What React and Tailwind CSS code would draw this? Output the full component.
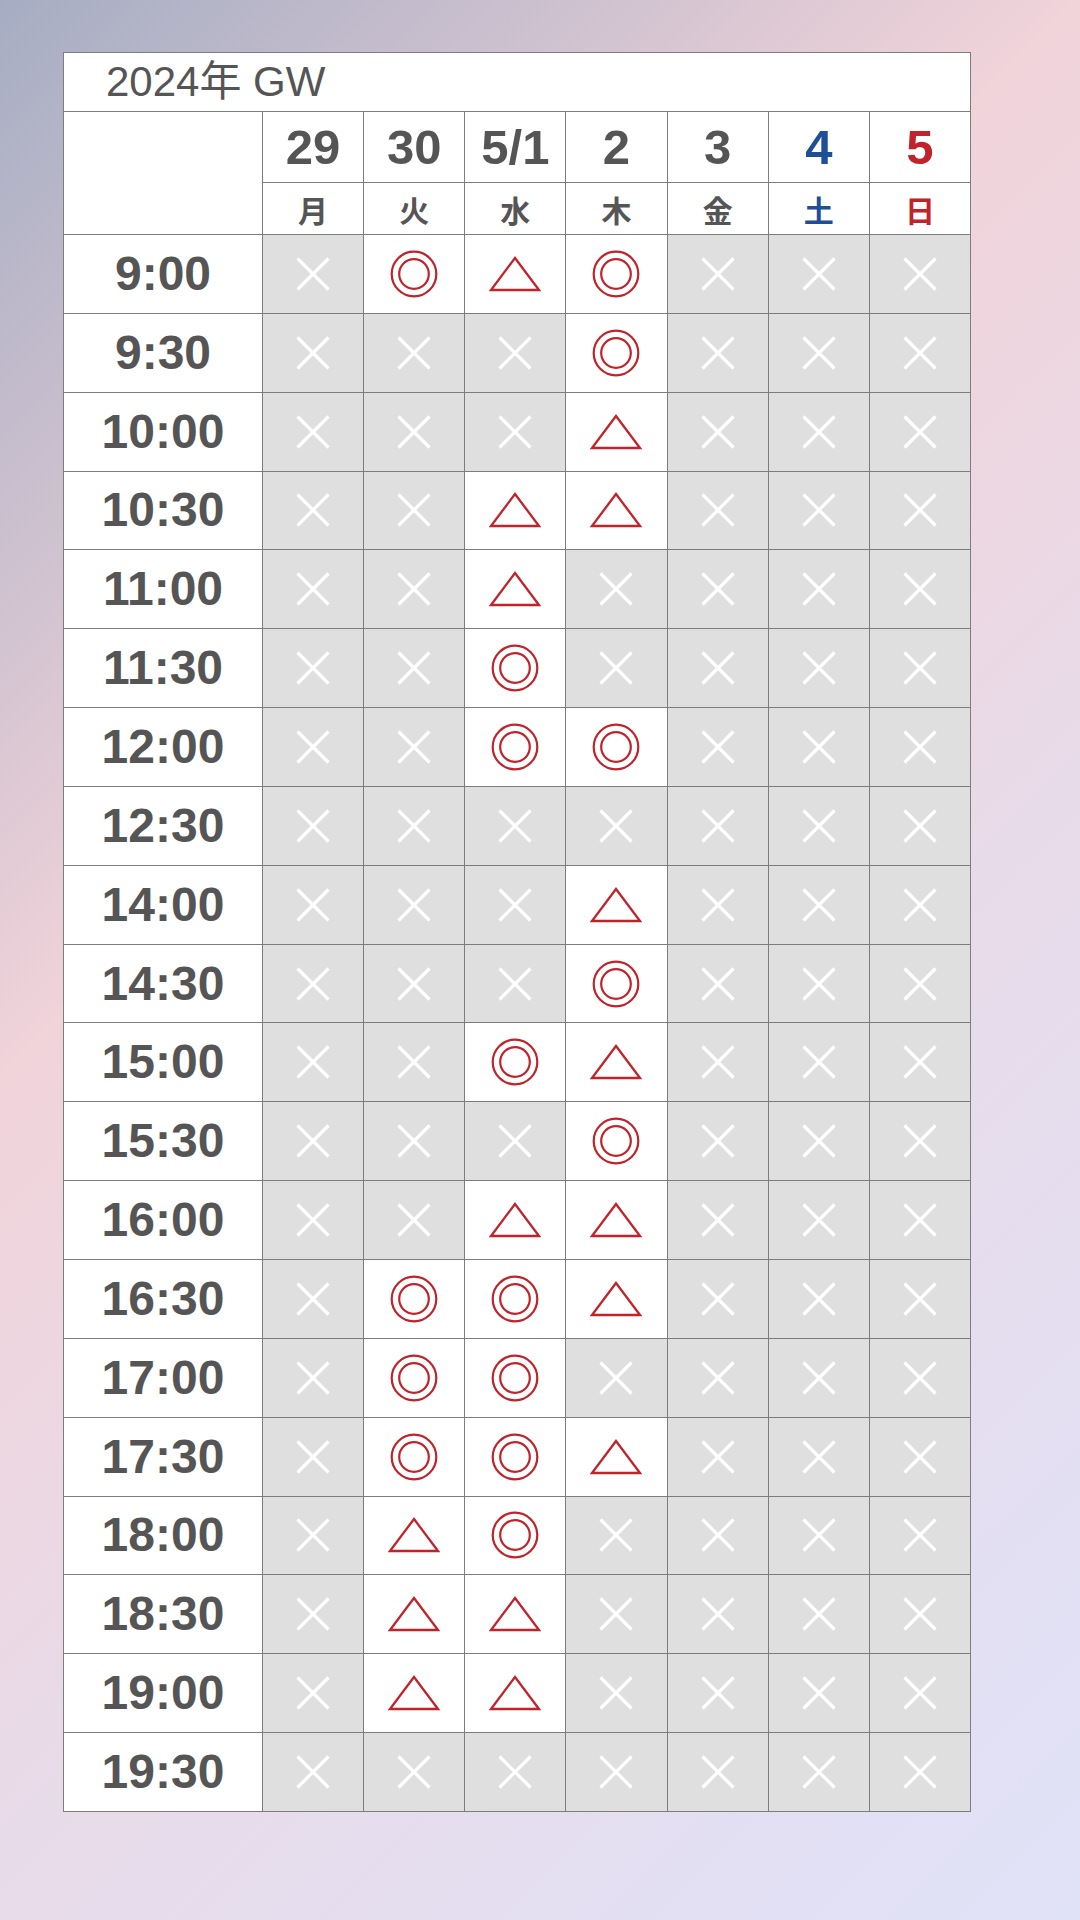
const days = [
  { date: "29", day: "月", color: "text-[#555555]" },
  { date: "30", day: "火", color: "text-[#555555]" },
  { date: "5/1", day: "水", color: "text-[#555555]" },
  { date: "2", day: "木", color: "text-[#555555]" },
  { date: "3", day: "金", color: "text-[#555555]" },
  { date: "4", day: "土", color: "text-[#1f4f96]" },
  { date: "5", day: "日", color: "text-[#c1232b]" },
];

// o = ◎, t = △, x = ×   (columns: 29, 30, 5/1, 2 — 3/4/5 are always full)
const slots = [
  ["9:00", "xotoxxx"],
  ["9:30", "xxxoxxx"],
  ["10:00", "xxxtxxx"],
  ["10:30", "xxttxxx"],
  ["11:00", "xxtxxxx"],
  ["11:30", "xxoxxxx"],
  ["12:00", "xxooxxx"],
  ["12:30", "xxxxxxx"],
  ["14:00", "xxxtxxx"],
  ["14:30", "xxxoxxx"],
  ["15:00", "xxotxxx"],
  ["15:30", "xxxoxxx"],
  ["16:00", "xxttxxx"],
  ["16:30", "xootxxx"],
  ["17:00", "xooxxxx"],
  ["17:30", "xootxxx"],
  ["18:00", "xtoxxxx"],
  ["18:30", "xttxxxx"],
  ["19:00", "xttxxxx"],
  ["19:30", "xxxxxxx"],
];

function Cross() {
  return (
    <svg width="34" height="34" viewBox="0 0 34 34" aria-hidden="true">
      <path d="M1.5 1.5 L32.5 32.5 M32.5 1.5 L1.5 32.5" stroke="#ffffff" strokeWidth="3.2" fill="none" />
    </svg>
  );
}

function DoubleCircle() {
  return (
    <svg width="50" height="50" viewBox="0 0 50 50" aria-hidden="true">
      <circle cx="25" cy="25" r="22.3" stroke="#c1232b" strokeWidth="2.2" fill="none" />
      <circle cx="25" cy="25" r="14.8" stroke="#c1232b" strokeWidth="2.2" fill="none" />
    </svg>
  );
}

function Triangle() {
  return (
    <svg width="52" height="36" viewBox="0 0 52 36" aria-hidden="true">
      <polygon points="26,2 50,34 2,34" stroke="#c1232b" strokeWidth="2.3" fill="none" strokeLinejoin="miter" />
    </svg>
  );
}

function Cell({ mark }) {
  if (mark === "x") {
    return (
      <div className="bg-[#dfdfdf] flex items-center justify-center">
        <Cross />
      </div>
    );
  }
  return (
    <div className="bg-white flex items-center justify-center">
      {mark === "o" ? <DoubleCircle /> : <Triangle />}
    </div>
  );
}

export default function App() {
  return (
    <div className="min-h-[1920px] w-full bg-[linear-gradient(135deg,#a6adc3_0%,#f1d3da_36%,#e8dbe9_62%,#e0e2f8_100%)] pt-[52px] pl-[63px] font-['Liberation_Sans','Noto_Sans_CJK_JP',sans-serif]">
      <div className="w-[908px] grid grid-cols-[198px_repeat(7,1fr)] grid-rows-[58px_70px_51px_repeat(20,77.85px)] gap-px p-px bg-[#7d7d7d]">
        <div className="col-span-8 bg-white flex items-center pl-[42px] text-[42px] text-[#555555] leading-none">
          2024年 GW
        </div>

        <div className="row-span-2 bg-white" />
        {days.map((d) => (
          <div key={d.date} className={`bg-white flex items-center justify-center text-[49px] font-bold leading-none ${d.color}`}>
            {d.date}
          </div>
        ))}
        {days.map((d) => (
          <div
            key={d.day}
            className={`bg-white flex items-center justify-center text-[30px] font-bold leading-none font-['Noto_Sans_CJK_JP',sans-serif] ${d.color}`}
          >
            {d.day}
          </div>
        ))}

        {slots.map(([time, marks]) => (
          <div key={time} className="contents">
            <div className="bg-white flex items-center justify-center text-[48px] font-bold text-[#555555] leading-none">
              {time}
            </div>
            {marks.split("").map((m, i) => (
              <Cell key={i} mark={m} />
            ))}
          </div>
        ))}
      </div>
    </div>
  );
}
